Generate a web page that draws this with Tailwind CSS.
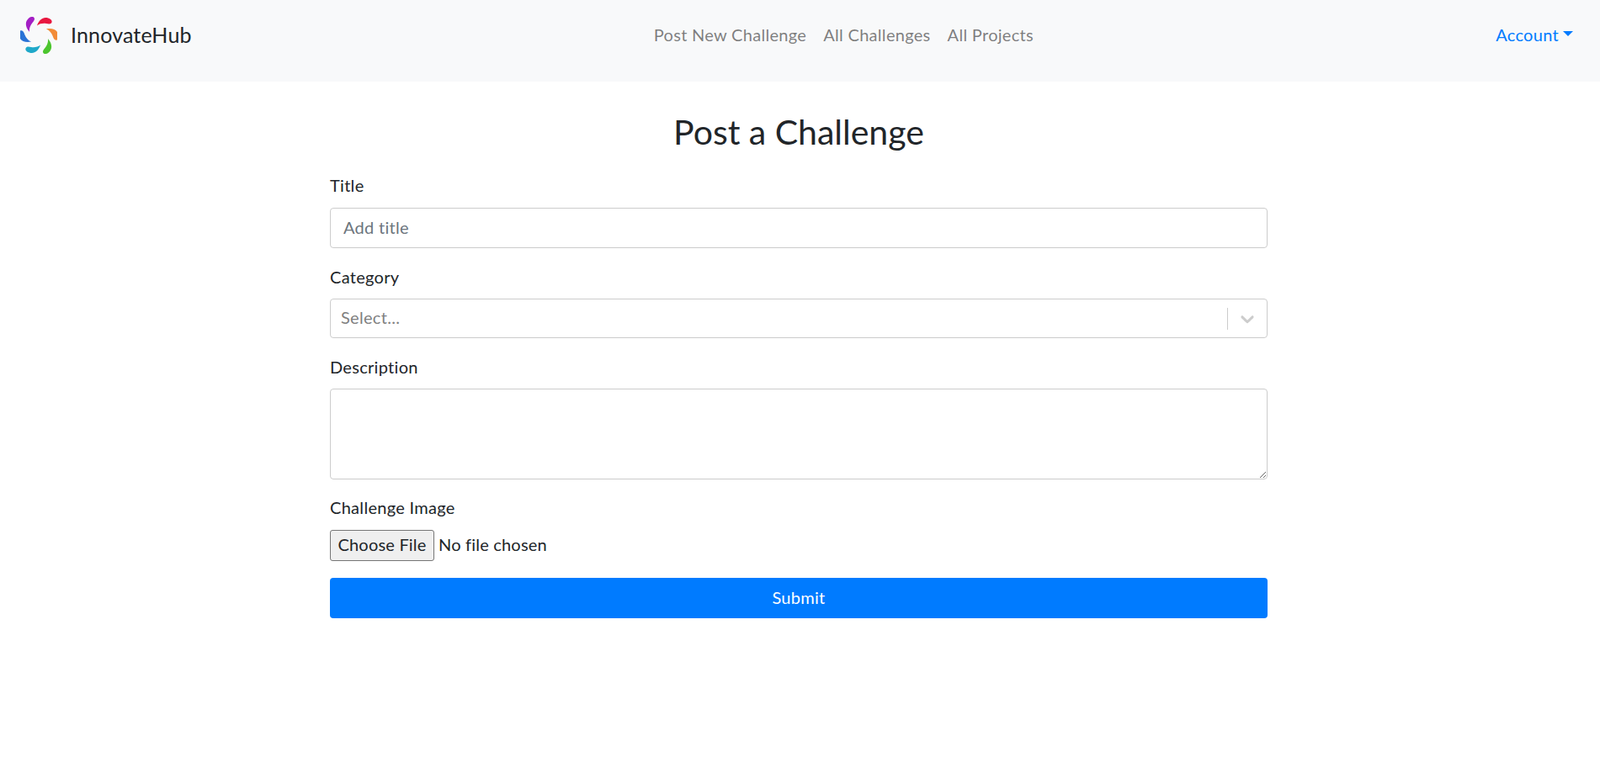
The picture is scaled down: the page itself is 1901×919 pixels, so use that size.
<!DOCTYPE html>
<html lang="en">
<head>
    <meta charset="UTF-8">
    <meta name="viewport" content="width=device-width, initial-scale=1.0">
    <title>InnovateHub - Post a Challenge</title>
    <script src="https://cdn.jsdelivr.net/npm/@tailwindcss/browser@4"></script>
</head>
<body class="bg-white text-[#212529] font-['Lato',sans-serif] text-[20px] tracking-[0.3px]">
    <!-- Navbar -->
    <nav class="h-[97px] bg-[#f8f9fa] flex items-center pl-[24px] pr-[32px] pb-[13px]">
        <a href="#" class="flex items-center gap-[16px] text-[25px] tracking-[0.15px] text-[#212529]">
            <svg width="44" height="44" viewBox="-22 -22 44 44">
                <path fill="#e8173f" d="M-2-11.500C0-17.500 4-21 8-21 12.500-21 16.500-18.500 15.500-15.500 14.500-13 12-13.500 9-14 5-14.500 1-14-2-11.500Z"/>
                <path fill="#f28c38" transform="rotate(60)" d="M-2-11.500C0-17.500 4-21 8-21 12.500-21 16.500-18.500 15.500-15.500 14.500-13 12-13.500 9-14 5-14.500 1-14-2-11.500Z"/>
                <path fill="#4cc52e" transform="rotate(120)" d="M-2-11.500C0-17.500 4-21 8-21 12.500-21 16.500-18.500 15.500-15.500 14.500-13 12-13.500 9-14 5-14.500 1-14-2-11.500Z"/>
                <path fill="#1fa8c9" transform="rotate(180)" d="M-2-11.500C0-17.500 4-21 8-21 12.500-21 16.500-18.500 15.500-15.500 14.500-13 12-13.500 9-14 5-14.500 1-14-2-11.500Z"/>
                <path fill="#2a72d6" transform="rotate(240)" d="M-2-11.500C0-17.500 4-21 8-21 12.500-21 16.500-18.500 15.500-15.500 14.500-13 12-13.500 9-14 5-14.500 1-14-2-11.500Z"/>
                <path fill="#a31fc4" transform="rotate(300)" d="M-2-11.500C0-17.500 4-21 8-21 12.500-21 16.500-18.500 15.500-15.500 14.500-13 12-13.500 9-14 5-14.500 1-14-2-11.500Z"/>
            </svg>
            <span class="mb-[1px]">InnovateHub</span>
        </a>
        <ul class="flex gap-[20px] mx-auto mb-[3px] text-[rgba(0,0,0,0.5)]">
            <li><a href="#">Post New Challenge</a></li>
            <li><a href="#">All Challenges</a></li>
            <li><a href="#">All Projects</a></li>
        </ul>
        <a href="#" class="flex items-center gap-[5px] mb-[3px] text-[#007bff]">
            Account
            <span class="w-0 h-0 border-x-[6px] border-x-transparent border-t-[6px] border-t-[#007bff] mb-[2px]"></span>
        </a>
    </nav>

    <main class="w-[1114px] ml-[392px] pt-[36px]">
        <h1 class="text-[41px] leading-[48px] tracking-normal text-center mb-[25px]">Post a Challenge</h1>
        <form>
            <label class="block leading-[28px] mb-[13px]">Title</label>
            <input type="text" placeholder="Add title" class="block w-full h-[48px] border border-[#cccccc] rounded-[4px] px-[15px] pb-[3px] placeholder:text-[#6c757d] mb-[20px]">

            <label class="block leading-[28px] mb-[12px]">Category</label>
            <div class="flex items-center h-[47px] border border-[#cccccc] rounded-[4px] mb-[20px]">
                <span class="flex-1 pl-[12px] pb-[4px] text-[#808080]">Select...</span>
                <span class="w-px h-[26px] bg-[#cccccc]"></span>
                <svg class="mx-[10px]" width="26" height="26" viewBox="0 0 20 20" fill="#cccccc">
                    <path d="M4.516 7.548c.436-.446 1.043-.481 1.576 0L10 11.295l3.908-3.747c.533-.481 1.141-.446 1.574 0 .436.445.408 1.197 0 1.615-.406.418-4.695 4.502-4.695 4.502a1.095 1.095 0 0 1-1.576 0S4.924 9.581 4.516 9.163c-.409-.418-.436-1.17 0-1.615z"/>
                </svg>
            </div>

            <label class="block leading-[28px] mb-[12px]">Description</label>
            <textarea class="block w-full h-[108px] border border-[#cccccc] rounded-[4px] px-[15px] py-[6px] mb-[20px]"></textarea>

            <label class="block leading-[28px] -mt-[1px] mb-[13px]">Challenge Image</label>
            <input type="file" class="block w-full h-[37px] mb-[20px] tracking-[0.2px] file:h-[37px] file:w-[124px] file:pb-[3px] file:bg-[#efefef] file:border file:border-[#767676] file:rounded-[3px] file:mr-[5px] file:text-[#212529]">

            <button type="button" class="block w-full h-[48px] pb-[2px] bg-[#007bff] text-white rounded-[4px]">Submit</button>
        </form>
    </main>
</body>
</html>
